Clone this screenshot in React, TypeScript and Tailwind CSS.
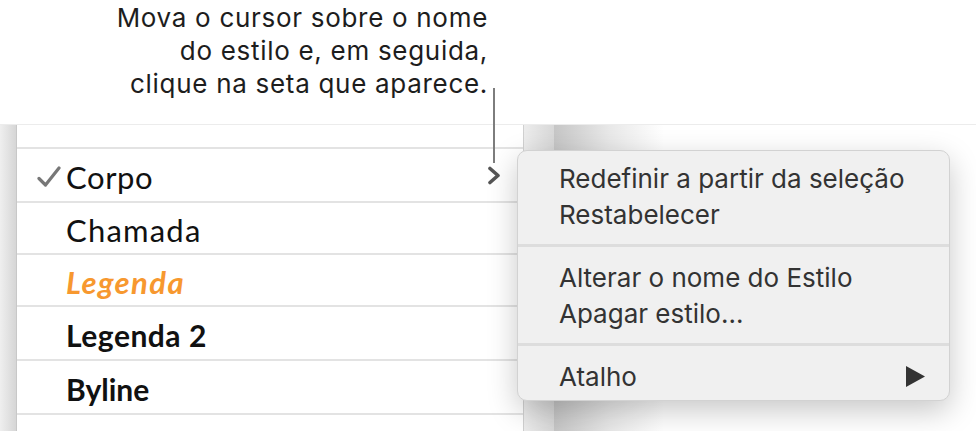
import React from 'react';

const rows = [
  { label: 'Corpo', h: 'h-[54px]', cls: 'text-[31px] tracking-[0.6px] font-normal text-[#111]', checked: true },
  { label: 'Chamada', h: 'h-[52px]', cls: 'text-[31px] tracking-[1.2px] font-normal text-[#111]' },
  { label: 'Legenda', h: 'h-[52px]', cls: 'text-[31px] tracking-[1.4px] font-bold italic text-[#f7982f]' },
  { label: 'Legenda 2', h: 'h-[54px]', cls: 'text-[30px] tracking-[0.5px] font-bold text-[#111]' },
  { label: 'Byline', h: 'h-[54px]', cls: 'text-[30px] font-bold text-[#111]' },
];

function MenuItem({ children }: { children: React.ReactNode }) {
  return <div className="h-[36px] flex items-center pl-[41px] pr-[24px]">{children}</div>;
}

export default function App() {
  return (
    <div
      className="relative w-[976px] h-[431px] overflow-hidden bg-white"
      style={{ fontFamily: 'Inter, "Liberation Sans", sans-serif' }}
    >
      {/* Annotation */}
      <div className="h-[124px]">
        <div className="w-[488px] pt-[1px] text-right text-[26px] tracking-[0.7px] leading-[33px] text-[#1d1d1d]">
          <div>Mova o cursor sobre o nome</div>
          <div>do estilo e, em seguida,</div>
          <div>clique na seta que aparece.</div>
        </div>
      </div>

      {/* Panel */}
      <div className="flex h-[307px] border-t border-[#ececec]">
        <div className="w-[17px] bg-gradient-to-r from-[#efefef] to-[#d6d6d6] border-r border-[#c8c8c8]" />

        <div className="w-[506px] flex flex-col" style={{ fontFamily: 'Lato, "Open Sans", sans-serif' }}>
          <div className="h-[24px] border-b-2 border-[#e3e3e3]" />
          {rows.map((r) => (
            <div key={r.label} className={`${r.h} flex items-center border-b-2 border-[#e3e3e3] pt-[5px]`}>
              <div className="w-[49px] pl-[20px] flex items-center">
                {r.checked && (
                  <svg className="-mt-[3px]" width="24" height="21" viewBox="0 0 24 21" fill="none">
                    <path d="M2 12.5 L8.5 19 L22 2" stroke="#777" strokeWidth="3.2" strokeLinecap="round" strokeLinejoin="round" />
                  </svg>
                )}
              </div>
              <div className={`flex-1 ${r.cls}`}>{r.label}</div>
              {r.checked && (
                <svg className="mr-[21px] -mt-[5px]" width="15" height="19" viewBox="0 0 15 19" fill="none">
                  <path d="M3 2.5 L11 9.5 L3 16.5" stroke="#555" strokeWidth="3.6" strokeLinecap="round" strokeLinejoin="round" />
                </svg>
              )}
            </div>
          ))}
          <div className="flex-1" />
        </div>

        <div className="w-[31px] bg-gradient-to-r from-[#ececec] to-[#d8d8d8] border-l border-[#d0d0d0]" />
        <div className="w-[110px] bg-gradient-to-r from-[#c6c6c6] via-[#e8e8e8] to-white" />
        <div className="flex-1 bg-white" />
      </div>

      {/* Callout line */}
      <div className="absolute left-[493px] top-[88px] w-[2px] h-[75px] bg-[#7d7d7d]" />

      {/* Context menu */}
      <div className="absolute left-[517px] top-[150px] w-[433px] h-[251px] rounded-[10px] bg-[#f0f0f0] border border-[#d2d2d2] shadow-[0_10px_30px_rgba(0,0,0,0.22)] text-[26px] text-[#333] pt-[9px]">
        <MenuItem>Redefinir a partir da seleção</MenuItem>
        <MenuItem>Restabelecer</MenuItem>
        <div className="my-[12px] h-[3px] bg-[#dddddd]" />
        <MenuItem>Alterar o nome do Estilo</MenuItem>
        <MenuItem>Apagar estilo...</MenuItem>
        <div className="my-[12px] h-[3px] bg-[#dddddd]" />
        <div className="h-[36px] flex items-center justify-between pl-[41px] pr-[24px]">
          <span>Atalho</span>
          <svg width="19" height="21" viewBox="0 0 19 21">
            <path d="M0 0 L19 10.5 L0 21 Z" fill="#333" />
          </svg>
        </div>
      </div>
    </div>
  );
}
